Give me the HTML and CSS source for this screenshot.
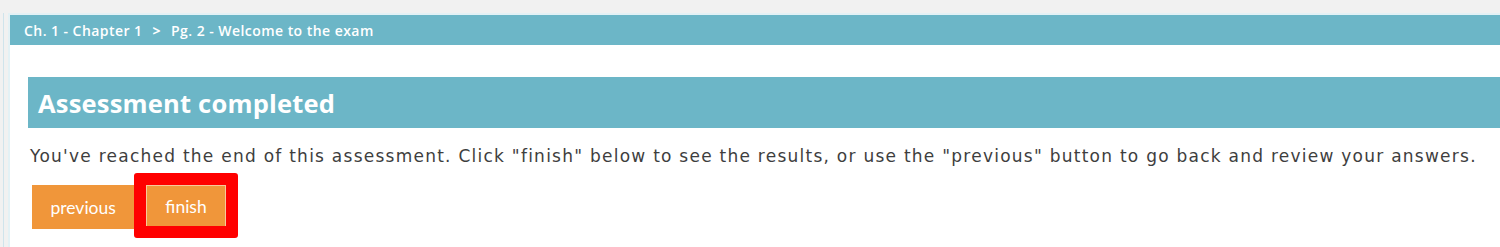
FILE: index.html
```html
<!DOCTYPE html>
<html lang="en">
<head>
<meta charset="utf-8">
<title>Assessment completed</title>
<link rel="stylesheet" href="styles.css">
</head>
<body>
<div class="page">
  <div class="rail"></div>
  <main class="card">
    <nav class="crumbs">
      <span>Ch. 1 - Chapter 1</span>
      <span class="sep">&gt;</span>
      <span>Pg. 2 - Welcome to the exam</span>
    </nav>
    <section class="content">
      <h1 class="title">Assessment completed</h1>
      <p class="msg">You've reached the end of this assessment. Click "finish" below to see the results, or use the "previous" button to go back and review your answers.</p>
      <div class="actions">
        <button class="btn">previous</button>
        <div class="highlight-wrap">
          <button class="btn btn-finish">finish</button>
          <span class="highlight"></span>
        </div>
      </div>
    </section>
  </main>
</div>
</body>
</html>
```
FILE: styles.css
```css
* { box-sizing: border-box; }
html, body { margin: 0; padding: 0; }
body {
  background: #f1f1f1;
  width: 1500px;
  height: 247px;
  overflow: hidden;
  font-family: "Open Sans", "DejaVu Sans", sans-serif;
}
.page {
  display: flex;
  padding-top: 13px;
  height: 247px;
}
.rail {
  width: 8px;
  border-left: 3px solid #f1f1f1;
  border-right: 4px solid #f1f1f1;
  background: #cfe4ec;
  flex: none;
}
.card {
  flex: 1;
  background: #fff;
  border-top: 2px solid #e3f1f5;
  border-left: 2px solid #e3f1f5;
}
.crumbs {
  background: #6cb6c7;
  height: 30px;
  display: flex;
  align-items: center;
  gap: 10px;
  padding-left: 14px;
  color: #fff;
  font-family: "Open Sans", sans-serif;
  font-weight: 600;
  font-size: 14px;
  letter-spacing: 0.45px;
}
.crumbs .sep { font-weight: 700; }
.content {
  padding: 32px 0 0 18px;
}
.title {
  margin: 0;
  background: #6cb6c7;
  color: #fff;
  height: 51px;
  display: flex;
  align-items: center;
  padding-left: 10px;
  font-family: "Open Sans", sans-serif;
  font-weight: 700;
  font-size: 25.5px;
  letter-spacing: 0.2px;
}
.msg {
  margin: 17px 0 0 2px;
  color: #3e3e3e;
  font-family: "DejaVu Sans", sans-serif;
  font-size: 17px;
  line-height: 22px;
  letter-spacing: 1.25px;
  white-space: nowrap;
}
.actions {
  display: flex;
  align-items: flex-start;
  gap: 12px;
  margin: 18px 0 0 4px;
}
.btn {
  background: #f0963a;
  color: #fff;
  border: 1px solid #f0963a;
  height: 44px;
  padding: 0 17.5px;
  font-family: "Lato", sans-serif;
  font-size: 17.5px;
  font-weight: 400;
  cursor: pointer;
}
.btn-finish {
  border-color: #f8c89a;
  height: 42px;
  padding: 0 18px;
}
.highlight-wrap {
  position: relative;
}
.highlight {
  position: absolute;
  left: -12px;
  top: -12px;
  right: -12px;
  bottom: -11px;
  border: 12px solid #f00;
  border-radius: 3px;
}
```
